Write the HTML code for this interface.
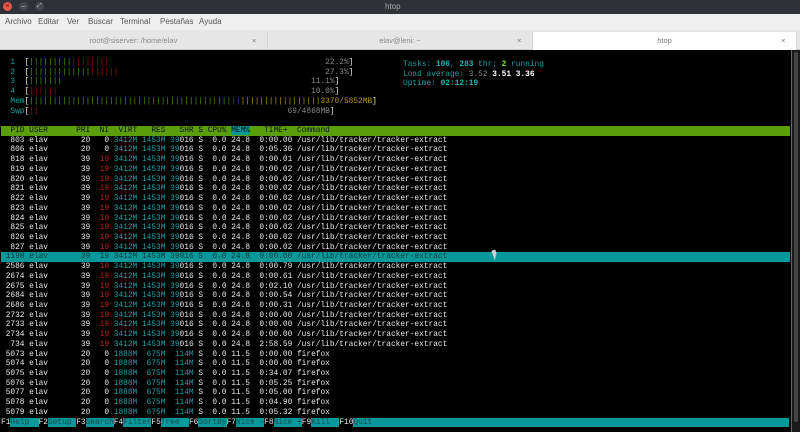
<!DOCTYPE html>
<html><head><meta charset="utf-8"><style>
*{margin:0;padding:0;box-sizing:border-box}
body{width:800px;height:432px;overflow:hidden;background:#000;font-family:"Liberation Sans",sans-serif;position:relative}
#tb{position:absolute;left:0;top:0;width:800px;height:14px;background:#2e3136;color:#aaa;font-size:8px}
#mb{position:absolute;left:0;top:14px;width:800px;height:16px;background:#efefef;color:#555;font-size:8px}
#mb span{position:absolute;top:3px}
#tabs{position:absolute;left:0;top:30px;width:800px;height:20px;background:#e6e6e6;color:#888;font-size:7.5px;border-bottom:1px solid #ccc}
.tab{position:absolute;top:2px;height:18px;border-right:1px solid #d4d4d4;text-align:center;line-height:18px}
.tab i{position:absolute;font-style:normal;color:#777}
#term{position:absolute;left:0;top:50px;width:791px;height:382px;background:#000}
#sb{position:absolute;left:791px;top:50px;width:9px;height:382px;background:#1a1a1a;border-left:1px solid #666}
pre{position:absolute;left:1px;top:8px;font-family:"Liberation Mono",monospace;font-size:7.83px;line-height:9.72px;color:#e8e8e8;white-space:pre}
.c{color:#17a2a2}.r{color:#cc1d1d}.g{color:#4e9a06}.dr{color:#a01010}.b{color:#2a4fa0}.y{color:#b8960c}.gy{color:#8a8a8a}
.hd{background:#5a9e0c;color:#111;display:inline-block;width:789px}
.mm{background:#06989a}
.sel{background:#06989a;color:#003a3a;display:inline-block;width:789px}
.fk{background:#06989a;color:#1a4a4a}
.bw{color:#fff;font-weight:bold}
.bc{color:#17b5b5;font-weight:bold}
</style></head><body>
<div id="tb">
<div style="position:absolute;left:3px;top:2px;width:9px;height:9px;border-radius:50%;background:#e05a4a;color:#600;font-size:7px;line-height:9px;text-align:center">×</div>
<div style="position:absolute;left:19px;top:2px;width:9px;height:9px;border-radius:50%;background:#45484d;color:#ccc;font-size:7px;line-height:9px;text-align:center">–</div>
<div style="position:absolute;left:35px;top:2px;width:9px;height:9px;border-radius:50%;background:#45484d;color:#ccc;font-size:6px;line-height:9px;text-align:center">⤢</div>
<div style="position:absolute;left:385px;top:2px">htop</div>
</div>
<div id="mb"><span style="left:5px">Archivo</span><span style="left:38px">Editar</span><span style="left:67px">Ver</span><span style="left:88px">Buscar</span><span style="left:120px">Terminal</span><span style="left:160px">Pestañas</span><span style="left:199px">Ayuda</span></div>
<div id="tabs">
<div class="tab" style="left:0;width:268px">root@siserver: /home/elav<i style="left:252px">×</i></div>
<div class="tab" style="left:268px;width:265px">elav@leni: ~<i style="left:249px">×</i></div>
<div class="tab" style="left:533px;width:264px;background:#fff;color:#777;top:2px;height:19px">htop<i style="left:248px">×</i></div>
</div>
<div id="term">
<pre>
  <span class="c">1</span>  [<span class="g">|||||||||</span><span class="dr">||||||||</span>                                              <span class="gy">22.2%</span>]
  <span class="c">2</span>  [<span class="g">|||||||||||||</span><span class="dr">||||||</span>                                            <span class="gy">27.3%</span>]
  <span class="c">3</span>  [<span class="g">|||||||</span>                                                     <span class="gy">11.1%</span>]
  <span class="c">4</span>  [<span class="dr">||||||</span>                                                      <span class="gy">10.0%</span>]
  <span class="c">Mem</span>[<span class="g">|||||||||||||||||||||||||||||||||||||||||||</span><span class="b">||</span><span class="y">|||||||||||||||||3370/5852MB</span>]
  <span class="c">Swp</span>[<span class="dr">||</span>                                                     <span class="gy">69/4868MB</span>]

<span class="hd">  PID USER      PRI  NI  VIRT   RES   SHR S CPU% <span class="mm">MEM%</span>   TIME+  Command</span>
  803 elav       20   0 <span class="c">3412M 1453M 39</span>016 S  0.0 24.8  0:00.00 /usr/lib/tracker/tracker-extract
  806 elav       20   0 <span class="c">3412M 1453M 39</span>016 S  0.0 24.8  0:05.36 /usr/lib/tracker/tracker-extract
  818 elav       39  <span class="r">19</span> <span class="c">3412M 1453M 39</span>016 S  0.0 24.8  0:00.01 /usr/lib/tracker/tracker-extract
  819 elav       39  <span class="r">19</span> <span class="c">3412M 1453M 39</span>016 S  0.0 24.8  0:00.02 /usr/lib/tracker/tracker-extract
  820 elav       39  <span class="r">19</span> <span class="c">3412M 1453M 39</span>016 S  0.0 24.8  0:00.02 /usr/lib/tracker/tracker-extract
  821 elav       39  <span class="r">19</span> <span class="c">3412M 1453M 39</span>016 S  0.0 24.8  0:00.02 /usr/lib/tracker/tracker-extract
  822 elav       39  <span class="r">19</span> <span class="c">3412M 1453M 39</span>016 S  0.0 24.8  0:00.02 /usr/lib/tracker/tracker-extract
  823 elav       39  <span class="r">19</span> <span class="c">3412M 1453M 39</span>016 S  0.0 24.8  0:00.02 /usr/lib/tracker/tracker-extract
  824 elav       39  <span class="r">19</span> <span class="c">3412M 1453M 39</span>016 S  0.0 24.8  0:00.02 /usr/lib/tracker/tracker-extract
  825 elav       39  <span class="r">19</span> <span class="c">3412M 1453M 39</span>016 S  0.0 24.8  0:00.02 /usr/lib/tracker/tracker-extract
  826 elav       39  <span class="r">19</span> <span class="c">3412M 1453M 39</span>016 S  0.0 24.8  0:00.02 /usr/lib/tracker/tracker-extract
  827 elav       39  <span class="r">19</span> <span class="c">3412M 1453M 39</span>016 S  0.0 24.8  0:00.02 /usr/lib/tracker/tracker-extract
<span class="sel"> 1198 elav       39  19 3412M 1453M 39016 S  0.0 24.8  0:00.00 /usr/lib/tracker/tracker-extract</span>
 2586 elav       39  <span class="r">19</span> <span class="c">3412M 1453M 39</span>016 S  0.0 24.8  0:00.79 /usr/lib/tracker/tracker-extract
 2674 elav       39  <span class="r">19</span> <span class="c">3412M 1453M 39</span>016 S  0.0 24.8  0:00.61 /usr/lib/tracker/tracker-extract
 2675 elav       39  <span class="r">19</span> <span class="c">3412M 1453M 39</span>016 S  0.0 24.8  0:02.10 /usr/lib/tracker/tracker-extract
 2684 elav       39  <span class="r">19</span> <span class="c">3412M 1453M 39</span>016 S  0.0 24.8  0:00.54 /usr/lib/tracker/tracker-extract
 2686 elav       39  <span class="r">19</span> <span class="c">3412M 1453M 39</span>016 S  0.0 24.8  0:00.31 /usr/lib/tracker/tracker-extract
 2732 elav       39  <span class="r">19</span> <span class="c">3412M 1453M 39</span>016 S  0.0 24.8  0:00.00 /usr/lib/tracker/tracker-extract
 2733 elav       39  <span class="r">19</span> <span class="c">3412M 1453M 39</span>016 S  0.0 24.8  0:00.00 /usr/lib/tracker/tracker-extract
 2734 elav       39  <span class="r">19</span> <span class="c">3412M 1453M 39</span>016 S  0.0 24.8  0:00.00 /usr/lib/tracker/tracker-extract
  734 elav       39  <span class="r">19</span> <span class="c">3412M 1453M 39</span>016 S  0.0 24.8  2:58.59 /usr/lib/tracker/tracker-extract
 5073 elav       20   0 <span class="c">1888M  675M  114M</span> S  0.0 11.5  0:00.00 firefox
 5074 elav       20   0 <span class="c">1888M  675M  114M</span> S  0.0 11.5  0:00.00 firefox
 5075 elav       20   0 <span class="c">1888M  675M  114M</span> S  0.0 11.5  0:34.07 firefox
 5076 elav       20   0 <span class="c">1888M  675M  114M</span> S  0.0 11.5  0:05.25 firefox
 5077 elav       20   0 <span class="c">1888M  675M  114M</span> S  0.0 11.5  0:05.00 firefox
 5078 elav       20   0 <span class="c">1888M  675M  114M</span> S  0.0 11.5  0:04.90 firefox
 5079 elav       20   0 <span class="c">1888M  675M  114M</span> S  0.0 11.5  0:05.32 firefox
F1<span class="fk">Help  </span>F2<span class="fk">Setup </span>F3<span class="fk">Search</span>F4<span class="fk">Filter</span>F5<span class="fk">Tree  </span>F6<span class="fk">SortBy</span>F7<span class="fk">Nice -</span>F8<span class="fk">Nice +</span>F9<span class="fk">Kill  </span>F10<span class="fk" style="display:inline-block;width:436px">Quit</span></pre>
<pre style="left:403px;top:10px"><span class="c">Tasks: </span><span class="bc">106</span><span class="c">, </span><span class="bc">283</span><span class="c"> thr; </span><span style="color:#8ae234;font-weight:bold">2</span><span class="c"> running</span>
<span class="c">Load average: </span><span class="gy">3.52 </span><span class="bw">3.51 </span><span class="bw">3.36</span>
<span class="c">Uptime: </span><span class="bc">02:12:19</span></pre>
<div style="position:absolute;left:493px;top:200px;width:0;height:0;border-left:4px solid #ccc;border-bottom:6px solid transparent;border-top:4px solid #ccc;transform:rotate(-20deg)"></div>
</div>
<div id="sb"><div style="position:absolute;left:2px;top:2px;width:4px;height:370px;background:#444;border-radius:2px"></div></div>
</body></html>
